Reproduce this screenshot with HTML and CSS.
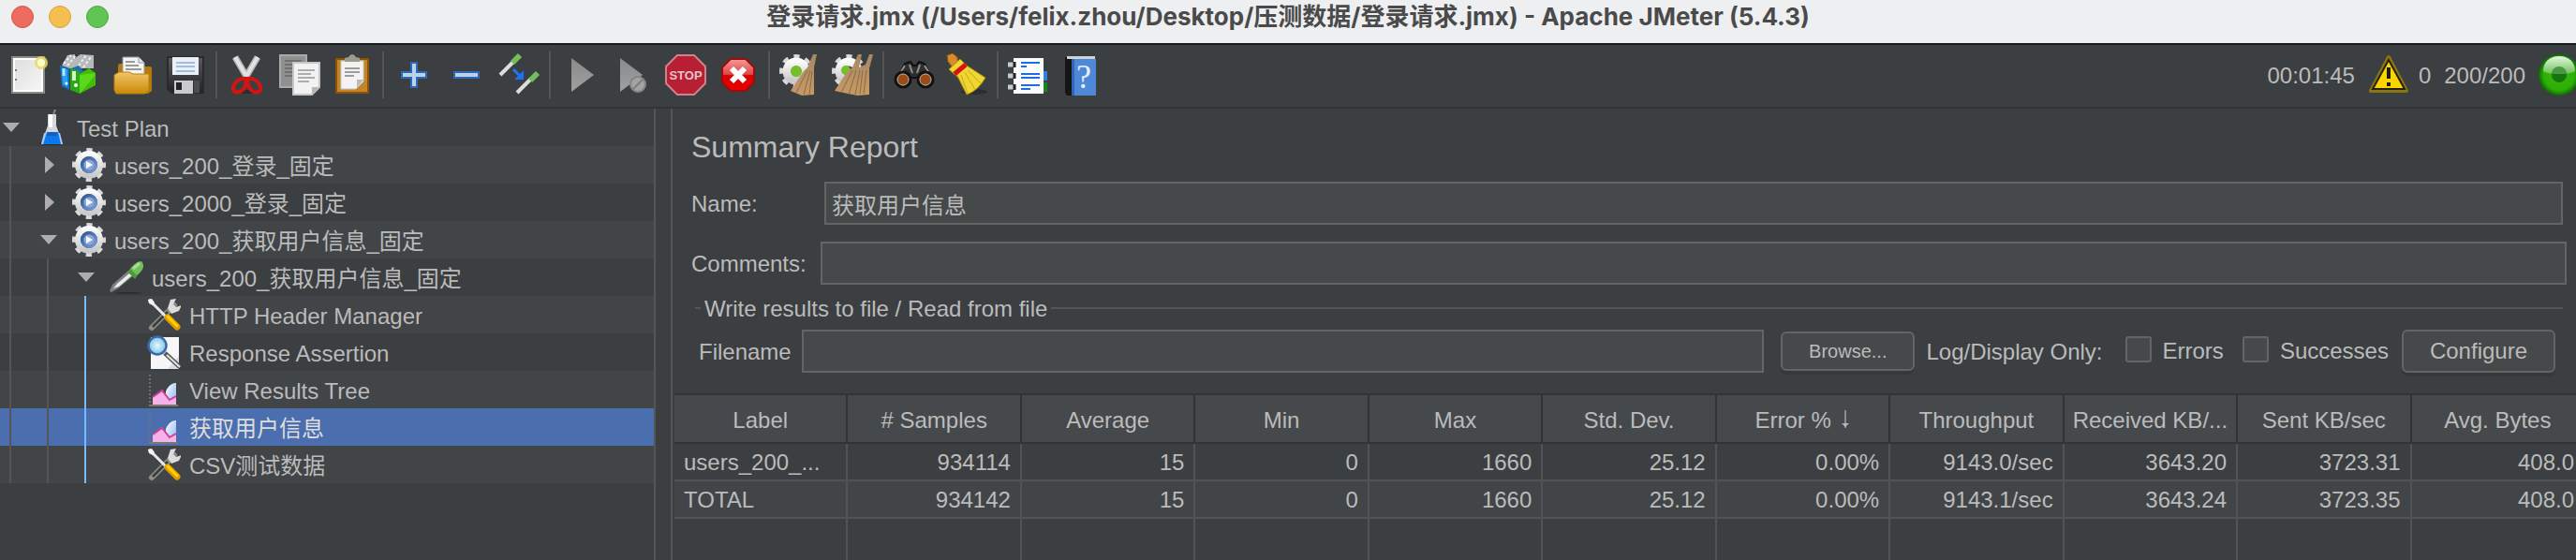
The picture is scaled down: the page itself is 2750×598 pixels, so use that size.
FILE: index.html
```html
<!DOCTYPE html>
<html lang="zh-CN">
<head>
<meta charset="utf-8">
<title>登录请求.jmx - Apache JMeter (5.4.3)</title>
<link rel="stylesheet" href="styles.css">
</head>
<body>
<svg class="defs" aria-hidden="true">
  <defs>
    <linearGradient id="paper" x1="0" y1="0" x2="1" y2="1"><stop offset="0" stop-color="#dcdcdc"/><stop offset="1" stop-color="#f8f8f8"/></linearGradient>
    <linearGradient id="gold" x1="0" y1="0" x2="0" y2="1"><stop offset="0" stop-color="#f0c468"/><stop offset="1" stop-color="#c98a08"/></linearGradient>
    <linearGradient id="silver" x1="0" y1="0" x2="0" y2="1"><stop offset="0" stop-color="#fafafa"/><stop offset="1" stop-color="#c9c9c9"/></linearGradient>
    <linearGradient id="grey" x1="0" y1="0" x2="0" y2="1"><stop offset="0" stop-color="#8a8a8a"/><stop offset="1" stop-color="#a0a0a0"/></linearGradient>
    <linearGradient id="red" x1="0" y1="0" x2="0" y2="1"><stop offset="0" stop-color="#f49a9a"/><stop offset=".48" stop-color="#e04848"/><stop offset=".52" stop-color="#d60000"/><stop offset="1" stop-color="#e80000"/></linearGradient>
    <linearGradient id="gloss" x1="0" y1="0" x2="0" y2="1"><stop offset="0" stop-color="#e4f5df"/><stop offset="1" stop-color="#6cc256"/></linearGradient>
    <linearGradient id="dark" x1="0" y1="0" x2="0" y2="1"><stop offset="0" stop-color="#5c5c60"/><stop offset="1" stop-color="#232326"/></linearGradient>
    <linearGradient id="blue" x1="0" y1="0" x2="1" y2="1"><stop offset="0" stop-color="#2a4d8c"/><stop offset="1" stop-color="#7fa9e8"/></linearGradient>
    <linearGradient id="sky" x1="0" y1="0" x2="1" y2="1"><stop offset="0" stop-color="#ffffff"/><stop offset="1" stop-color="#86b4f4"/></linearGradient>
    <linearGradient id="straw" x1="0" y1="0" x2="0" y2="1"><stop offset="0" stop-color="#a58865"/><stop offset="1" stop-color="#c79a66"/></linearGradient>
    <radialGradient id="lens"><stop offset="0" stop-color="#e2fbff"/><stop offset="1" stop-color="#7fc4e4"/></radialGradient>
    <radialGradient id="lamp"><stop offset="0" stop-color="#39b60c"/><stop offset=".75" stop-color="#2fae05"/><stop offset="1" stop-color="#0b6b04"/></radialGradient>
  </defs>
  <symbol id="i-gear" viewBox="0 0 36 36">
    <circle cx="18" cy="18" r="15" fill="none" stroke="#dadada" stroke-width="6" stroke-dasharray="5.89 5.89" stroke-dashoffset="2.95"/>
    <circle cx="18" cy="18" r="12" fill="none" stroke="url(#silver)" stroke-width="6"/>
    <circle cx="18" cy="18" r="9" fill="url(#blue)"/>
    <circle cx="18" cy="18" r="5.500" fill="#8fa9d0"/>
    <path d="M15 14l7 4-7 4z" fill="#f4f8ff"/>
  </symbol>
  <symbol id="i-dropper" viewBox="0 0 36 36">
    <ellipse cx="20" cy="35" rx="15" ry="1" fill="#2c2e2f"/>
    <path d="M0 33l3-7 17-15 6 5-17 14-7 4z" fill="#7c807f"/>
    <path d="M4 30l4-5 13-11 3 2-14 12z" fill="#eceeee"/>
    <path d="M19 12l3-3 8 7-3 4z" fill="#4a9a35"/>
    <path d="M22 9c4-5 8-8 12-8 4 4 2 10-5 15z" fill="#74bd5c"/>
    <path d="M25 9l7-6" stroke="#a7dd92" stroke-width="3"/>
  </symbol>
  <symbol id="i-tools" viewBox="0 0 36 36">
    <path d="M5 32L29 8" stroke="#8c8c8a" stroke-width="6" stroke-linecap="round"/>
    <path d="M6 31L22 15" stroke="#3a3b3b" stroke-width="2.500"/>
    <path d="M22 11l3-9 6-1-3 6 3 3 6-2-3 6-8 3z" fill="#dcdcda"/>
    <path d="M2 2l18 18" stroke="#e9e9e9" stroke-width="3"/>
    <path d="M1 2l4-1 3 4-2 3-4-2z" fill="#f2f2f2"/>
    <path d="M22 21l10 10" stroke="#e09a00" stroke-width="7" stroke-linecap="round"/>
    <path d="M22 20l10 10" stroke="#ffd400" stroke-width="3" stroke-linecap="round"/>
  </symbol>
  <symbol id="i-assert" viewBox="0 0 36 36">
    <path d="M4 2h30v34H4z" fill="#f7f7f7"/>
    <path d="M22 36h12V22z" fill="#dedede"/>
    <path d="M19 19l16 15" stroke="#55585a" stroke-width="5"/>
    <path d="M21 21l14 13" stroke="#e3e5e6" stroke-width="2"/>
    <circle cx="11" cy="11" r="9.500" fill="url(#lens)" stroke="#3f68a8" stroke-width="2.500"/>
  </symbol>
  <symbol id="i-chart" viewBox="0 0 36 36">
    <path d="M3 2v32" stroke="#717171" stroke-width="2" stroke-dasharray="2 2"/>
    <path d="M2 35h31" stroke="#777" stroke-width="2"/>
    <path d="M20 20c3-7 7-9 11-9v23H20z" fill="url(#sky)"/>
    <path d="M6 34v-8l10-8 8 11 7-5v10z" fill="#f6b2e8"/>
    <path d="M6 26l10-7 8 10 7-4" fill="none" stroke="#cc3f96" stroke-width="2"/>
  </symbol>
  <symbol id="i-flask" viewBox="0 0 36 38">
    <ellipse cx="18" cy="36" rx="13" ry="2" fill="#2a2c2d"/>
    <path d="M20 5l2-5" stroke="#85898b" stroke-width="2"/>
    <path d="M14 5h9v12l7 20H7l7-20z" fill="#d3d8db"/>
    <path d="M15 5h4v14h-4z" fill="#fff"/>
    <path d="M10 25h17l3 12H7z" fill="#a9c8fb"/>
    <path d="M13 24h12l3 13H9z" fill="#0c78ee"/>
    <path d="M14 24h10v4H13z" fill="#1a5cc0"/>
  </symbol>
</svg>

<header class="titlebar">
  <div class="lights">
    <button class="light close" aria-label="Close"></button>
    <button class="light minimise" aria-label="Minimise"></button>
    <button class="light zoom" aria-label="Zoom"></button>
  </div>
  <div class="title">登录请求.jmx (/Users/felix.zhou/Desktop/压测数据/登录请求.jmx) - Apache JMeter (5.4.3)</div>
</header>

<div class="toolbar">
  <button class="tool" aria-label="New"><svg viewBox="0 0 48 48"><path d="M7 5h34v38H7z" fill="url(#paper)" stroke="#8b8d86" stroke-width="2"/><path d="M9 7h30v34H9z" fill="none" stroke="#fff" stroke-width="2"/><path d="M10 19h2M10 29h2" stroke="#777" stroke-width="2"/><circle cx="38" cy="11" r="7" fill="#e8dc62" opacity=".85"/><circle cx="38" cy="11" r="4" fill="#fffbd0"/></svg></button>
  <button class="tool" aria-label="Templates"><svg viewBox="0 0 48 48"><path d="M4 14l6-11 8-1v4l6-4 14 1v14H12z" fill="#b4b9bb"/><path d="M6 12l8-9M10 14l9-11M22 14l8-11M27 16l8-11" stroke="#eef0f0" stroke-width="2" stroke-dasharray="3 2"/><path d="M2 14l10 3v23l-8-4z" fill="#1173c4"/><path d="M4 17l6 1v19l-5-3z" fill="#2aa0ee"/><path d="M14 17l8-3 5 6v10H14z" fill="#1d70b5"/><path d="M13 17l10 3v24l-10-4z" fill="#2aa818"/><path d="M23 23l10-6 7 5v13l-17 9z" fill="#3fbf05"/><path d="M23 24l16-2v3l-16 19z" fill="#5bd81a"/><path d="M17 20v10" stroke="#d8f5c8" stroke-width="4"/><path d="M6 17v8" stroke="#b8e0ff" stroke-width="3"/><circle cx="9" cy="33" r="1.500" fill="#fff"/><circle cx="19" cy="35" r="2" fill="#fff"/></svg></button>
  <button class="tool" aria-label="Open"><svg viewBox="0 0 48 48"><path d="M8 14q0-2 2-2h5v8h20v-5h7q2 0 2 2v24l-4 3H8z" fill="#b57a0a"/><path d="M13 5h17l6 6v13H13z" fill="#f4f4f4" stroke="#9a9a9a"/><path d="M16 10h10M16 14h14M16 18h17" stroke="#9a9a9a" stroke-width="2"/><path d="M30 5v6h6" fill="#dfe7f2" stroke="#9a9a9a"/><path d="M4 24l5-3h11l4 2h17v17l-4 4H6l-2-4z" fill="url(#gold)" stroke="#bb7f0a"/></svg></button>
  <button class="tool" aria-label="Save"><svg viewBox="0 0 48 48"><path d="M5 5h38v38H9l-4-4z" fill="url(#dark)" stroke="#2a2a2c" stroke-width="2"/><path d="M10 5h28v19H10z" fill="#e9f0f8"/><path d="M14 11h20M14 15h20M14 20h20" stroke="#a4bdd8" stroke-width="2"/><path d="M12 30h20v14H12z" fill="#c9cbcc"/><path d="M14 32h6v8h-6z" fill="#242426"/><path d="M33 30h6v13h-6z" fill="#4c4d50"/></svg></button>
  <span class="sep"></span>
  <button class="tool" aria-label="Cut"><svg viewBox="0 0 48 48"><ellipse cx="25" cy="42" rx="14" ry="2" fill="#2a2c2d"/><path d="M11 5l13 22M35 5L22 27" stroke="#b5b5b5" stroke-width="7"/><path d="M11 5l13 22M35 5L22 27" stroke="#e2e2e2" stroke-width="4"/><path d="M23 28c-6-1-13 3-14 9s6 7 10 3 4-8 4-12zM24 28c6-1 13 3 14 9s-6 7-10 3-4-8-4-12z" fill="none" stroke="#d31414" stroke-width="4"/></svg></button>
  <button class="tool" aria-label="Copy"><svg viewBox="0 0 48 48"><path d="M3 3h28v34H3z" fill="#8f9191" stroke="#a9abab" stroke-width="2"/><path d="M8 9h18M8 13h8M8 17h8M8 21h8M8 25h8" stroke="#6f7171" stroke-width="2"/><path d="M17 11h28v26l-8 8H17z" fill="#f2f2f2" stroke="#c7c7c7" stroke-width="2"/><path d="M22 19h18M22 23h14M22 27h18M22 31h12" stroke="#adadad" stroke-width="2"/><path d="M45 37h-8v8z" fill="#b5b7b4"/></svg></button>
  <button class="tool" aria-label="Paste"><svg viewBox="0 0 48 48"><path d="M7 7h34v36H7z" fill="#c5832c" stroke="#8a5308" stroke-width="2"/><path d="M12 9h24v22l-8 8H12z" fill="#f3f3f3" stroke="#c8c8c8"/><path d="M16 17h16M16 21h16M16 25h10" stroke="#9d9d9d" stroke-width="2"/><path d="M36 29h-7v9z" fill="#b9bab5"/><path d="M16 10V6l4-1q4-6 8 0l4 1v4z" fill="#9b9b90"/></svg></button>
  <span class="sep"></span>
  <button class="tool" aria-label="Expand all"><svg viewBox="0 0 48 48"><path d="M21 11h6v10h10v6H27v10h-6V27H11v-6h10z" fill="#b9d2ee" stroke="#2f68b4" stroke-width="2"/></svg></button>
  <button class="tool" aria-label="Collapse all"><svg viewBox="0 0 48 48"><path d="M11 21h26v6H11z" fill="#b9d2ee" stroke="#2f68b4" stroke-width="2"/></svg></button>
  <button class="tool" aria-label="Toggle"><svg viewBox="0 0 48 48"><path d="M4 24l14-14" stroke="#dcdedd" stroke-width="4"/><path d="M17 11l8-8" stroke="#74bd5c" stroke-width="6"/><path d="M22 43l15-15" stroke="#dcdedd" stroke-width="4"/><path d="M36 30l8-8" stroke="#74bd5c" stroke-width="6"/><path d="M18 18l6 6" stroke="#2575ee" stroke-width="3"/><path d="M29 19v10H19z" fill="#1c72f5"/></svg></button>
  <span class="sep"></span>
  <button class="tool" aria-label="Start"><svg viewBox="0 0 48 48"><path d="M14 6l24 18-24 18z" fill="url(#grey)"/></svg></button>
  <button class="tool" aria-label="Start no pauses"><svg viewBox="0 0 48 48"><path d="M10 6l24 18-24 18z" fill="url(#grey)"/><circle cx="29" cy="34" r="8" fill="#a3a3a3" stroke="#858585" stroke-width="2"/><path d="M24 39l10-10" stroke="#7e7e7e" stroke-width="2"/></svg></button>
  <button class="tool" aria-label="Stop"><svg viewBox="0 0 48 48"><path d="M15 3h18l12 12v18L33 45H15L3 33V15z" fill="#b71f35" stroke="#cf8088" stroke-width="2"/><text class="stop-text" x="24" y="29" text-anchor="middle">STOP</text></svg></button>
  <button class="tool" aria-label="Shutdown"><svg viewBox="0 0 48 48"><path d="M16 7h16l9 9v16l-9 9H16l-9-9V16z" fill="url(#red)" stroke="#9c0d0d" stroke-width="2"/><path d="M17 17l14 14M31 17L17 31" stroke="#fff" stroke-width="6"/></svg></button>
  <span class="sep"></span>
  <button class="tool" aria-label="Clear"><svg viewBox="0 0 48 48"><circle cx="20" cy="20" r="15" fill="none" stroke="#d9d9d9" stroke-width="6" stroke-dasharray="5.89 5.89" stroke-dashoffset="2.95"/><circle cx="20" cy="20" r="10" fill="none" stroke="url(#silver)" stroke-width="9"/><circle cx="20" cy="20" r="6" fill="#74bf2a"/><path d="M38 2h4l-3 14v29l-13 1-12-5 13-20 5-5z" fill="url(#straw)"/><path d="M32 19l-12 24M35 19l-7 26M37 20l-3 25" stroke="#8f6a40"/></svg></button>
  <button class="tool" aria-label="Clear all"><svg viewBox="0 0 48 48"><circle cx="20" cy="20" r="15" fill="none" stroke="#d9d9d9" stroke-width="6" stroke-dasharray="5.89 5.89" stroke-dashoffset="2.95"/><circle cx="20" cy="20" r="10" fill="none" stroke="url(#silver)" stroke-width="9"/><circle cx="17" cy="19" r="5" fill="#74bf2a"/><path d="M30 2h4l-3 14 7-3 4-11h4l-4 15v28l-13 1-24-5 13-20 6-5z" fill="url(#straw)"/><path d="M24 19L12 43M28 19l-8 26M32 19l-5 26M35 19l-3 25M39 19l-3 25" stroke="#8f6a40"/></svg></button>
  <span class="sep"></span>
  <button class="tool" aria-label="Search"><svg viewBox="0 0 48 48"><path d="M14 12l6-2 3 4h3l3-4 6 2 8 15H6z" fill="#2d2f30" stroke="#111" stroke-width="2"/><path d="M14 14l-7 11M35 14l7 11M19 13l3 9M30 13l-3 9" stroke="#8f9192" stroke-width="2"/><circle cx="12" cy="29" r="8" fill="#9a4c17" stroke="#111" stroke-width="3"/><circle cx="36" cy="29" r="8" fill="#9a4c17" stroke="#111" stroke-width="3"/><circle cx="12" cy="29" r="6" fill="none" stroke="#aaa"/><circle cx="36" cy="29" r="6" fill="none" stroke="#aaa"/></svg></button>
  <button class="tool" aria-label="Reset search"><svg viewBox="0 0 48 48"><ellipse cx="32" cy="42" rx="14" ry="3" fill="#2c2e2f"/><path d="M3 3l6-2 5 4 1 9-6 2-5-6z" fill="#d98b2c" stroke="#8a5410"/><path d="M5 18l12-11 9 9-11 11z" fill="#efd630" stroke="#ab8c08"/><path d="M13 23l11-9 20 13q-8 14-20 18z" fill="#efd630" stroke="#ab8c08"/><path d="M18 24l7 20M22 21l11 19M25 19l14 14" stroke="#c8a815"/><path d="M11 23l12-10" stroke="#d81313" stroke-width="5"/></svg></button>
  <span class="sep"></span>
  <button class="tool" aria-label="Function helper"><svg viewBox="0 0 48 48"><path d="M39 20h5v10h-5z" fill="#2e7fe0"/><path d="M39 32h5v10h-5z" fill="#16871c"/><path d="M8 6h32v38H8z" fill="#fbfbfb"/><path d="M16 11h20M16 15h6M16 23h20M16 27h20M16 35h20M16 39h10" stroke="#1c6de0" stroke-width="2"/><path d="M2 13h8M2 25h8M2 37h8" stroke="#c9c9c9" stroke-width="5"/><path d="M9 10v6M9 22v6M9 34v6" stroke="#222" stroke-width="3"/></svg></button>
  <button class="tool" aria-label="Help"><svg viewBox="0 0 48 48"><path d="M7 5h8v41H9l-2-3z" fill="#151515"/><path d="M9 4h30v3H9z" fill="#cfd3d8"/><path d="M14 7h26v39H14z" fill="#4f88d8"/><path d="M14 7h3v39h-3z" fill="#2f66b8"/><text class="help-text" x="27" y="38" text-anchor="middle">?</text></svg></button>
  <div class="status">
    <span>00:01:45</span>
    <svg class="warn" viewBox="0 0 44 44"><path d="M22 3L3 39h38z" fill="#f6cf00" stroke="#8a7413" stroke-width="4" stroke-linejoin="round"/><path d="M22 6L5 37h34z" fill="#f9d400" stroke="#26210a" stroke-width="2"/><path d="M22 14v12M22 30v4" stroke="#1c1c10" stroke-width="4"/></svg>
    <span class="count">0</span>
    <span>200/200</span>
    <svg class="lamp" viewBox="0 0 44 44"><circle cx="22" cy="22" r="22" fill="url(#lamp)"/><path d="M5 18C5 8 12 2 22 2s17 6 17 16c-5 4-29 4-34 0z" fill="url(#gloss)"/><circle cx="22" cy="22" r="8" fill="#14750e"/><path d="M14 21a8 8 0 0 1 16 0z" fill="#4d9447"/></svg>
  </div>
</div>

<main class="workspace">
  <ul class="tree" role="tree">
    <li class="row" role="treeitem"><span class="toggle open"></span><svg class="node"><use href="#i-flask"/></svg><span>Test Plan</span></li>
    <li class="row" role="treeitem"><i class="guide"></i><span class="toggle"></span><svg class="node"><use href="#i-gear"/></svg><span>users_200_登录_固定</span></li>
    <li class="row" role="treeitem"><i class="guide"></i><span class="toggle"></span><svg class="node"><use href="#i-gear"/></svg><span>users_2000_登录_固定</span></li>
    <li class="row" role="treeitem"><i class="guide"></i><span class="toggle open"></span><svg class="node"><use href="#i-gear"/></svg><span>users_200_获取用户信息_固定</span></li>
    <li class="row" role="treeitem"><i class="guide"></i><i class="guide"></i><span class="toggle open"></span><svg class="node"><use href="#i-dropper"/></svg><span>users_200_获取用户信息_固定</span></li>
    <li class="row" role="treeitem"><i class="guide"></i><i class="guide"></i><i class="guide active"></i><span class="toggle leaf"></span><svg class="node"><use href="#i-tools"/></svg><span>HTTP Header Manager</span></li>
    <li class="row" role="treeitem"><i class="guide"></i><i class="guide"></i><i class="guide active"></i><span class="toggle leaf"></span><svg class="node"><use href="#i-assert"/></svg><span>Response Assertion</span></li>
    <li class="row" role="treeitem"><i class="guide"></i><i class="guide"></i><i class="guide active"></i><span class="toggle leaf"></span><svg class="node"><use href="#i-chart"/></svg><span>View Results Tree</span></li>
    <li class="row selected" role="treeitem" aria-selected="true"><i class="guide"></i><i class="guide"></i><i class="guide active"></i><span class="toggle leaf"></span><svg class="node"><use href="#i-chart"/></svg><span>获取用户信息</span></li>
    <li class="row" role="treeitem"><i class="guide"></i><i class="guide"></i><i class="guide active"></i><span class="toggle leaf"></span><svg class="node"><use href="#i-tools"/></svg><span>CSV测试数据</span></li>
  </ul>

  <section class="pane">
    <h1>Summary Report</h1>
    <div class="field name"><label for="name">Name:</label><input id="name" type="text" value="获取用户信息"></div>
    <div class="field comments"><label for="comments">Comments:</label><input id="comments" type="text"></div>
    <fieldset class="group">
      <legend>Write results to file / Read from file</legend>
      <div class="file-row">
        <label for="filename">Filename</label>
        <input id="filename" type="text">
        <button class="btn small">Browse...</button>
        <span class="log">Log/Display Only:</span>
        <label class="check"><input type="checkbox">Errors</label>
        <label class="check"><input type="checkbox">Successes</label>
        <button class="btn">Configure</button>
      </div>
    </fieldset>
    <div class="results">
      <table>
        <thead>
          <tr><th>Label</th><th># Samples</th><th>Average</th><th>Min</th><th>Max</th><th>Std. Dev.</th><th>Error % <svg class="sort" viewBox="0 0 10 22"><path d="M5 1v19" stroke="#8a8d8f" stroke-width="2"/><path d="M1 15h8l-4 4z" fill="#b4b6b7"/></svg></th><th>Throughput</th><th>Received KB/...</th><th>Sent KB/sec</th><th>Avg. Bytes</th></tr>
        </thead>
        <tbody>
          <tr><td>users_200_...</td><td>934114</td><td>15</td><td>0</td><td>1660</td><td>25.12</td><td>0.00%</td><td>9143.0/sec</td><td>3643.20</td><td>3723.31</td><td>408.0</td></tr>
          <tr><td>TOTAL</td><td>934142</td><td>15</td><td>0</td><td>1660</td><td>25.12</td><td>0.00%</td><td>9143.1/sec</td><td>3643.24</td><td>3723.35</td><td>408.0</td></tr>
          <tr class="filler"><td></td><td></td><td></td><td></td><td></td><td></td><td></td><td></td><td></td><td></td><td></td></tr>
        </tbody>
      </table>
    </div>
  </section>
</main>
</body>
</html>
```

FILE: styles.css
```css
* { box-sizing: border-box; }

body {
  margin: 0;
  height: 100vh;
  display: flex;
  flex-direction: column;
  overflow: hidden;
  background: #3c3f41;
  color: #bbbbbb;
  font: 24px/28px "Liberation Sans", "Noto Sans CJK SC", sans-serif;
}

button, input { font: inherit; color: inherit; }
.defs { position: absolute; width: 0; height: 0; }

/* Window title */
.titlebar {
  display: grid;
  grid-template-columns: 1fr auto 1fr;
  align-items: center;
  padding: 0 12px 10px;
  height: 48px;
  background: #eeeff1;
  border-bottom: 2px solid #1b1c1d;
}
.lights { display: flex; gap: 16px; }
.light { width: 24px; height: 24px; padding: 0; border: 1px solid; border-radius: 50%; }
.close { background: #ed6b5f; border-color: #d65549; }
.minimise { background: #f5bf4f; border-color: #d8a13a; }
.zoom { background: #61c554; border-color: #4aa73d; }
.title {
  color: #4a4a4b;
  font: 700 26px/34px Inter, "Noto Sans CJK SC", sans-serif;
  white-space: nowrap;
}

/* Toolbar */
.toolbar {
  display: flex;
  align-items: center;
  height: 68px;
  padding: 0 0 2px 2px;
  border-bottom: 2px solid #323537;
}
.tool { width: 56px; height: 48px; padding: 0; border: 0; background: none; display: grid; place-items: center; }
.tool svg { width: 48px; height: 48px; }
.sep { width: 2px; height: 50px; margin: 0 4px; background: #555555; }
.stop-text { font: 700 13px "Liberation Sans", sans-serif; fill: #e8c3c8; }
.help-text { font: 36px "Liberation Serif", serif; fill: #e4eefb; }
.status { display: flex; align-items: center; margin-left: auto; }
.status span { padding-top: 2px; }
.warn { width: 44px; height: 44px; margin: 0 10px 0 14px; }
.count { margin-right: 14px; }
.lamp { width: 44px; height: 44px; margin-left: 14px; margin-right: -4px; }

/* Main split */
.workspace { flex: 1; display: flex; min-height: 0; }
.tree {
  flex: 0 0 700px;
  margin: 0;
  padding: 0;
  list-style: none;
  border-right: 2px solid #555555;
}
.row { display: flex; align-items: center; height: 40px; white-space: nowrap; }
.row:nth-child(even) { background: #414547; }
.row > span:last-child { padding-top: 4px; }
.row.selected { background: #4b6eaf; color: #dddddd; }
.guide { width: 30px; height: 40px; margin-left: 10px; border-left: 2px solid #555555; }
.guide.active { border-color: #78bbff; }
.toggle { width: 24px; height: 18px; background: #adadad; clip-path: polygon(8px 0, 18px 9px, 8px 18px); }
.toggle.open { clip-path: polygon(3px 4px, 21px 4px, 12px 14px); }
.toggle.leaf { background: none; }
.node { width: 36px; height: 38px; margin: 0 9px 0 13px; }

.pane {
  flex: 1;
  min-width: 0;
  display: flex;
  flex-direction: column;
  margin-left: 16px;
  padding-top: 21px;
  border-left: 2px solid #555555;
}
h1 { margin: 0 20px 17px; font-size: 32px; line-height: 40px; font-weight: 400; }

input[type="text"] {
  flex: 1;
  min-width: 0;
  height: 46px;
  padding: 0 6px;
  background: #45494a;
  border: 2px solid #646464;
  outline: 0;
}
.field { display: flex; align-items: center; margin-left: 20px; }
.field label, .file-row > label:first-child, .log { padding-top: 2px; }
.name { margin-right: 14px; margin-bottom: 18px; }
.name label { width: 142px; }
.comments { margin-right: 10px; }
.comments label { width: 138px; }

.group {
  min-width: 0;
  margin: 10px 14px 22px 24px;
  padding: 8px 8px 0 4px;
  border: 0 solid #555555;
  border-top-width: 2px;
}
.group legend { margin-left: 2px; padding: 2px 4px 0; }
.file-row { display: flex; align-items: center; }
.file-row > label:first-child { width: 110px; }
.btn {
  height: 46px;
  padding: 0 28px;
  background: #45494a;
  border: 2px solid #646464;
  border-radius: 6px;
  box-shadow: 0 4px 0 #36393a;
}
.btn.small { height: 42px; margin: 0 12px 0 18px; font-size: 20px; }
.log { margin-right: 24px; }
.check { display: flex; align-items: center; gap: 12px; margin-right: 20px; }
.check + .btn { margin-left: -6px; }
.check input {
  appearance: none;
  width: 28px;
  height: 28px;
  margin: 0 0 4px;
  background: #45494a;
  border: 2px solid #646464;
  border-radius: 3px;
}

/* Results */
.results { flex: 1; min-height: 0; overflow: hidden; padding-left: 2px; }
table {
  width: calc(100% + 10px);
  height: 100%;
  table-layout: fixed;
  border-collapse: separate;
  border-spacing: 0;
}
th, td { white-space: nowrap; overflow: hidden; }
th {
  height: 54px;
  padding: 4px 0 0;
  font-weight: 400;
  background: #45494b;
  border: 0 solid #313436;
  border-width: 2px 2px 2px 0;
}
td {
  height: 40px;
  padding: 2px 10px 0;
  text-align: right;
  border: 0 solid #515355;
  border-width: 0 2px 2px 0;
}
td:first-child { text-align: left; }
tbody tr:nth-child(2) { background: #414547; }
.filler td { height: auto; border-bottom: 0; }
.sort { width: 10px; height: 22px; margin-left: 4px; vertical-align: -2px; }
```
